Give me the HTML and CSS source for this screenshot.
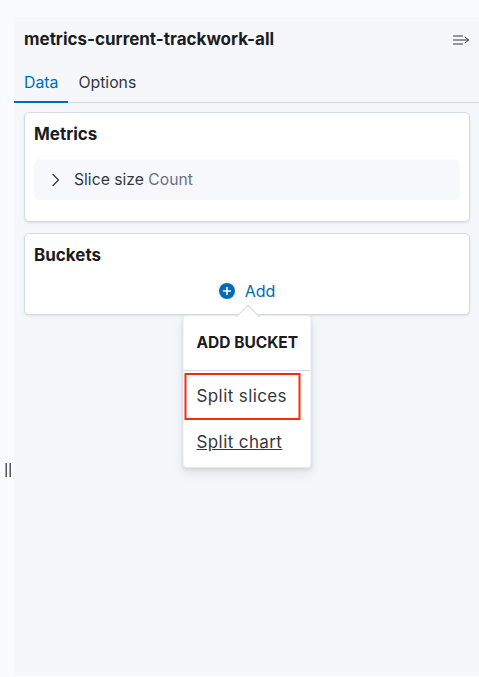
FILE: index.html
```html
<!DOCTYPE html>
<html lang="en">
<head>
<meta charset="utf-8">
<title>metrics-current-trackwork-all</title>
<link rel="stylesheet" href="styles.css">
</head>
<body>
<div class="page">
  <div class="resize-handle"><span></span><span></span></div>
  <div class="panel">
    <div class="header">
      <div class="title">metrics-current-trackwork-all</div>
      <svg class="menu-icon" width="16" height="16" viewBox="0 0 16 16" fill="none" stroke="#343741" stroke-width="1" stroke-linecap="round" stroke-linejoin="round">
        <path d="M0.5 4h9M0.5 8h15M0.5 12h9M12 5l3.5 3-3.5 3"/>
      </svg>
    </div>
    <div class="tabs">
      <div class="tab active">Data</div>
      <div class="tab">Options</div>
    </div>
    <div class="content">
      <div class="card">
        <div class="card-title">Metrics</div>
        <div class="agg-row">
          <svg class="chevron" width="16" height="16" viewBox="0 0 16 16" fill="none" stroke="#343741" stroke-width="1.2" stroke-linecap="round" stroke-linejoin="round">
            <path d="M5 2.5l5.5 5.5-5.5 5.5"/>
          </svg>
          <span class="agg-label">Slice size <span class="agg-type">Count</span></span>
        </div>
      </div>
      <div class="card buckets">
        <div class="card-title">Buckets</div>
        <div class="add-wrap">
          <div class="add-btn">
            <svg width="16" height="16" viewBox="0 0 16 16">
              <circle cx="8" cy="8" r="8" fill="#006bb8"/>
              <path d="M8 4v8M4 8h8" stroke="#fff" stroke-width="1.5"/>
            </svg>
            <span>Add</span>
          </div>
          <div class="popover">
            <div class="popover-arrow"></div>
            <div class="popover-title">ADD BUCKET</div>
            <div class="popover-body">
              <div class="menu-item highlighted"><span class="highlight-box">Split slices</span></div>
              <div class="menu-item"><span class="link">Split chart</span></div>
            </div>
          </div>
        </div>
      </div>
    </div>
  </div>
</div>
</body>
</html>
```
FILE: styles.css
```css
html, body {
  margin: 0;
  padding: 0;
}
body {
  background: #fafbfd;
  font-family: Inter, "Noto Sans", sans-serif;
  color: #343741;
  -webkit-font-smoothing: antialiased;
}
.page {
  position: relative;
  height: 677px;
  box-sizing: border-box;
  padding: 17px 0 2px 14px;
}
.resize-handle {
  position: absolute;
  left: 5px;
  top: 463px;
  display: flex;
  gap: 2px;
}
.resize-handle span {
  width: 1px;
  height: 14px;
  background: #535966;
  border-left: 0.5px solid #98a2b3;
}
.panel {
  background: #f5f7fa;
  height: 658px;
}
.header {
  height: 44px;
  padding: 0 10px;
  display: flex;
  align-items: center;
  justify-content: space-between;
}
.title {
  font-size: 17px;
  font-weight: 700;
  color: #1a1c21;
}
.menu-icon {
  margin-top: 2px;
}
.tabs {
  margin-top: 1px;
  height: 40px;
  display: flex;
  border-bottom: 1px solid #d3dae6;
}
.tab {
  position: relative;
  padding: 0 10px;
  display: flex;
  align-items: center;
  font-size: 15.8px;
  color: #343741;
}
.tab.active {
  color: #006bb8;
}
.tab.active::after {
  content: "";
  position: absolute;
  left: 0;
  right: 0;
  bottom: -1px;
  height: 2px;
  background: #006bb8;
}
.content {
  padding: 9px 9px 0 10px;
  display: flex;
  flex-direction: column;
  gap: 11px;
}
.card {
  background: #fff;
  border: 1px solid #d3dae6;
  border-radius: 5px;
  box-shadow: 0 1px 2px rgba(0, 0, 0, 0.07), 0 2px 4px rgba(0, 0, 0, 0.03);
  padding: 9px 9px 21px;
}
.card-title {
  font-size: 17px;
  line-height: 24px;
  font-weight: 700;
  color: #1a1c21;
}
.agg-row {
  margin-top: 13px;
  height: 41px;
  background: #f7f8fc;
  border-radius: 6px;
  display: flex;
  align-items: center;
  padding-left: 14px;
  gap: 10px;
}
.agg-label {
  font-size: 15.7px;
  color: #343741;
}
.agg-type {
  color: #69707d;
}
.buckets {
  padding-bottom: 11px;
}
.add-wrap {
  position: relative;
  margin-top: 12px;
  display: flex;
  justify-content: center;
}
.add-btn {
  position: relative;
  height: 24px;
  display: flex;
  align-items: center;
  gap: 10px;
  color: #006bb8;
  font-size: 16px;
}
.popover {
  position: absolute;
  top: calc(100% + 12px);
  left: 50%;
  transform: translateX(-50%);
  width: 129px;
  box-sizing: border-box;
  background: #fff;
  border: 1px solid #e3e8f2;
  border-radius: 4px;
  box-shadow: 0 2px 3px rgba(0, 0, 0, 0.08), 0 6px 12px rgba(0, 0, 0, 0.08);
  z-index: 10;
}
.popover-arrow {
  position: absolute;
  top: -8px;
  left: 50%;
  width: 16px;
  height: 16px;
  margin-left: -8px;
  background: #fff;
  border-top: 1px solid #d3dae6;
  border-left: 1px solid #d3dae6;
  transform: rotate(45deg);
}
.popover-title {
  position: relative;
  padding: 15px 12px 16px 13px;
  line-height: 23px;
  font-size: 15.5px;
  font-weight: 700;
  color: #1a1c21;
  border-bottom: 1px solid #d3dae6;
}
.popover-body {
  padding-top: 2px;
}
.menu-item {
  font-size: 17px;
  line-height: 23px;
  letter-spacing: 0.4px;
  color: #343741;
}
.menu-item.highlighted {
  padding-left: 1px;
}
.highlight-box {
  display: inline-block;
  border: 2px solid #f62a0c;
  padding: 10px 11px 10px 10px;
}
.menu-item .link {
  display: block;
  padding: 11px 13px 13px;
  text-decoration: underline;
}
```
